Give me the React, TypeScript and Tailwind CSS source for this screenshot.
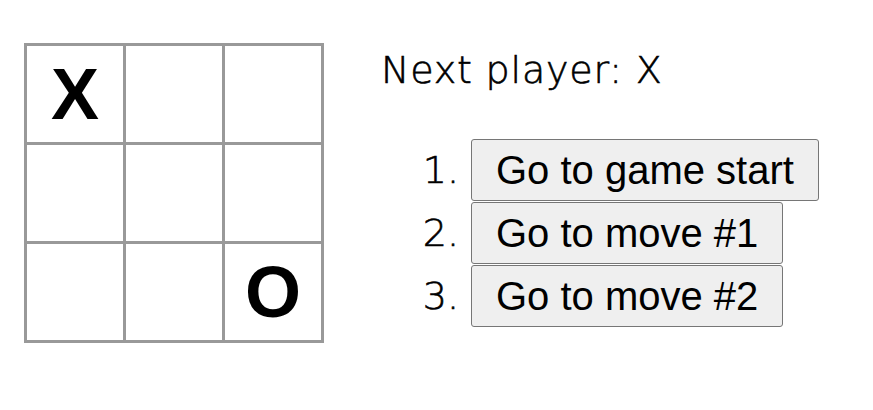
const board = ['X', '', '', '', '', '', '', '', 'O'];

const moves = ['Go to game start', 'Go to move #1', 'Go to move #2'];

const Square = ({ value }: { value: string }) => (
  <div className="flex h-[96px] w-[96px] items-center justify-center bg-white font-['Liberation_Sans',Arial,sans-serif] text-[72px] font-bold leading-none text-black">
    {value}
  </div>
);

export default function App() {
  return (
    <div className="flex h-[410px] w-[873px] items-start bg-white font-['DejaVu_Sans',sans-serif] text-black">
      <div className="ml-[24px] mt-[43px] grid grid-cols-3 gap-[3px] border-[3px] border-[#999] bg-[#999]">
        {board.map((v, i) => (
          <Square key={i} value={v} />
        ))}
      </div>

      <div className="ml-[57px] mt-[46px]">
        <div className="text-[38px] font-extralight leading-[48px] tracking-[0.8px] [-webkit-text-stroke:0.6px_black]">
          Next player: X
        </div>

        <ol className="mt-[45px] flex flex-col gap-px">
          {moves.map((m, i) => (
            <li key={m} className="flex items-center">
              <span className="w-[90px] pr-[12px] text-right text-[38px] font-extralight leading-[48px] [-webkit-text-stroke:0.6px_black]">
                {i + 1}.
              </span>
              <button className="h-[62px] rounded-[3px] border border-[#767676] bg-[#efefef] px-[24px] text-left font-['Liberation_Sans',Arial,sans-serif] text-[40px] leading-none text-black">
                {m}
              </button>
            </li>
          ))}
        </ol>
      </div>
    </div>
  );
}
